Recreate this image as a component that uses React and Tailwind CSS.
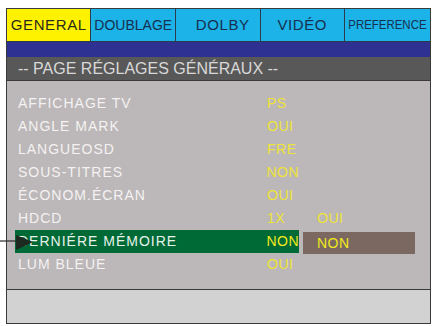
import React from "react";

const tabs = [
  { label: "GENERAL", active: true, cls: "text-[15px] tracking-[0.6px] justify-center" },
  { label: "DOUBLAGE", cls: "text-[14px] justify-center" },
  { label: "DOLBY", cls: "text-[15px] tracking-[0.6px] justify-center pl-[10px]" },
  { label: "VIDÉO", cls: "text-[15px] tracking-[0.6px] justify-center" },
  { label: "PREFERENCE", cls: "text-[13px] justify-center", narrow: true },
];

const rows = [
  { label: "AFFICHAGE TV", value: "PS" },
  { label: "ANGLE  MARK", value: "OUI" },
  { label: "LANGUEOSD", value: "FRE" },
  { label: "SOUS-TITRES", value: "NON" },
  { label: "ÉCONOM.ÉCRAN", value: "OUI" },
  { label: "HDCD", value: "1X", extra: "OUI" },
  { label: "DERNIÉRE MÉMOIRE", value: "NON", selected: true, box: "NON" },
  { label: "LUM BLEUE", value: "OUI" },
];

function Tab({ tab, last }) {
  return (
    <div
      className={`flex items-center w-[85px] h-full ${tab.cls} ${
        tab.active ? "bg-[#fff200] text-[#2b2a1c]" : "bg-[#1bb3e8] text-[#17304f]"
      } ${last ? "" : "border-r border-[#2c3a4a]"}`}
    >
      <span className={tab.narrow ? "inline-block scale-x-[0.88]" : ""}>{tab.label}</span>
    </div>
  );
}

function Row({ row }) {
  return (
    <div className="relative flex items-center h-[23px]">
      <div
        className={`flex items-center h-full w-[284px] pl-[3px] ${
          row.selected ? "bg-[#006a37] text-[#e6f2ea]" : "text-[#f4f2f2]"
        }`}
      >
        <span className="w-[249px] tracking-[1px]">{row.label}</span>
        <span className={`tracking-[0.5px] ${row.selected ? "text-[#f2ea1c]" : "text-[#eee437]"}`}>
          {row.value}
        </span>
      </div>
      {row.extra && (
        <span className="ml-[18px] text-[#eee437] tracking-[0.5px]">{row.extra}</span>
      )}
      {row.box && (
        <div className="ml-[4px] mt-[3px] flex items-center h-[22px] w-[112px] bg-[#7b6961] pl-[14px] text-[#f2ea1c] tracking-[0.5px]">
          {row.box}
        </div>
      )}
    </div>
  );
}

export default function App() {
  return (
    <div
      className="relative w-[434px] h-[326px] bg-white pt-[8px] pl-[6px]"
      style={{ fontFamily: '"Liberation Sans", Arial, sans-serif' }}
    >
      <div className="w-[425px] border border-[#3a3a3a] flex flex-col">
        {/* onglets */}
        <div className="flex h-[33px] border-b border-[#2c3a4a]">
          {tabs.map((t, i) => (
            <Tab key={t.label} tab={t} last={i === tabs.length - 1} />
          ))}
        </div>
        <div className="h-[15px] bg-[#2e3192]"></div>
        {/* titre de page */}
        <div className="h-[24px] bg-[#585858] border-b border-[#3a3a3a] flex items-center pl-[11px] text-[16px] text-[#d8d8d8]">
          -- PAGE RÉGLAGES GÉNÉRAUX --
        </div>
        {/* liste */}
        <div className="h-[208px] bg-[#bcb7b8] pt-[11px] pl-[8px] text-[14px]">
          {rows.map((r) => (
            <Row key={r.label} row={r} />
          ))}
        </div>
        <div className="h-[34px] bg-[#d3d2d2] border-t border-[#3a3a3a]"></div>
      </div>

      {/* flèche */}
      <svg
        className="absolute left-0 top-[234px]"
        width="34"
        height="17"
        viewBox="0 0 34 17"
      >
        <line x1="0" y1="7" x2="18" y2="7" stroke="#2a2a2a" strokeWidth="1.2" />
        <polygon points="16,1 33,8 16,16" fill="#1c2a1f" />
      </svg>
    </div>
  );
}
